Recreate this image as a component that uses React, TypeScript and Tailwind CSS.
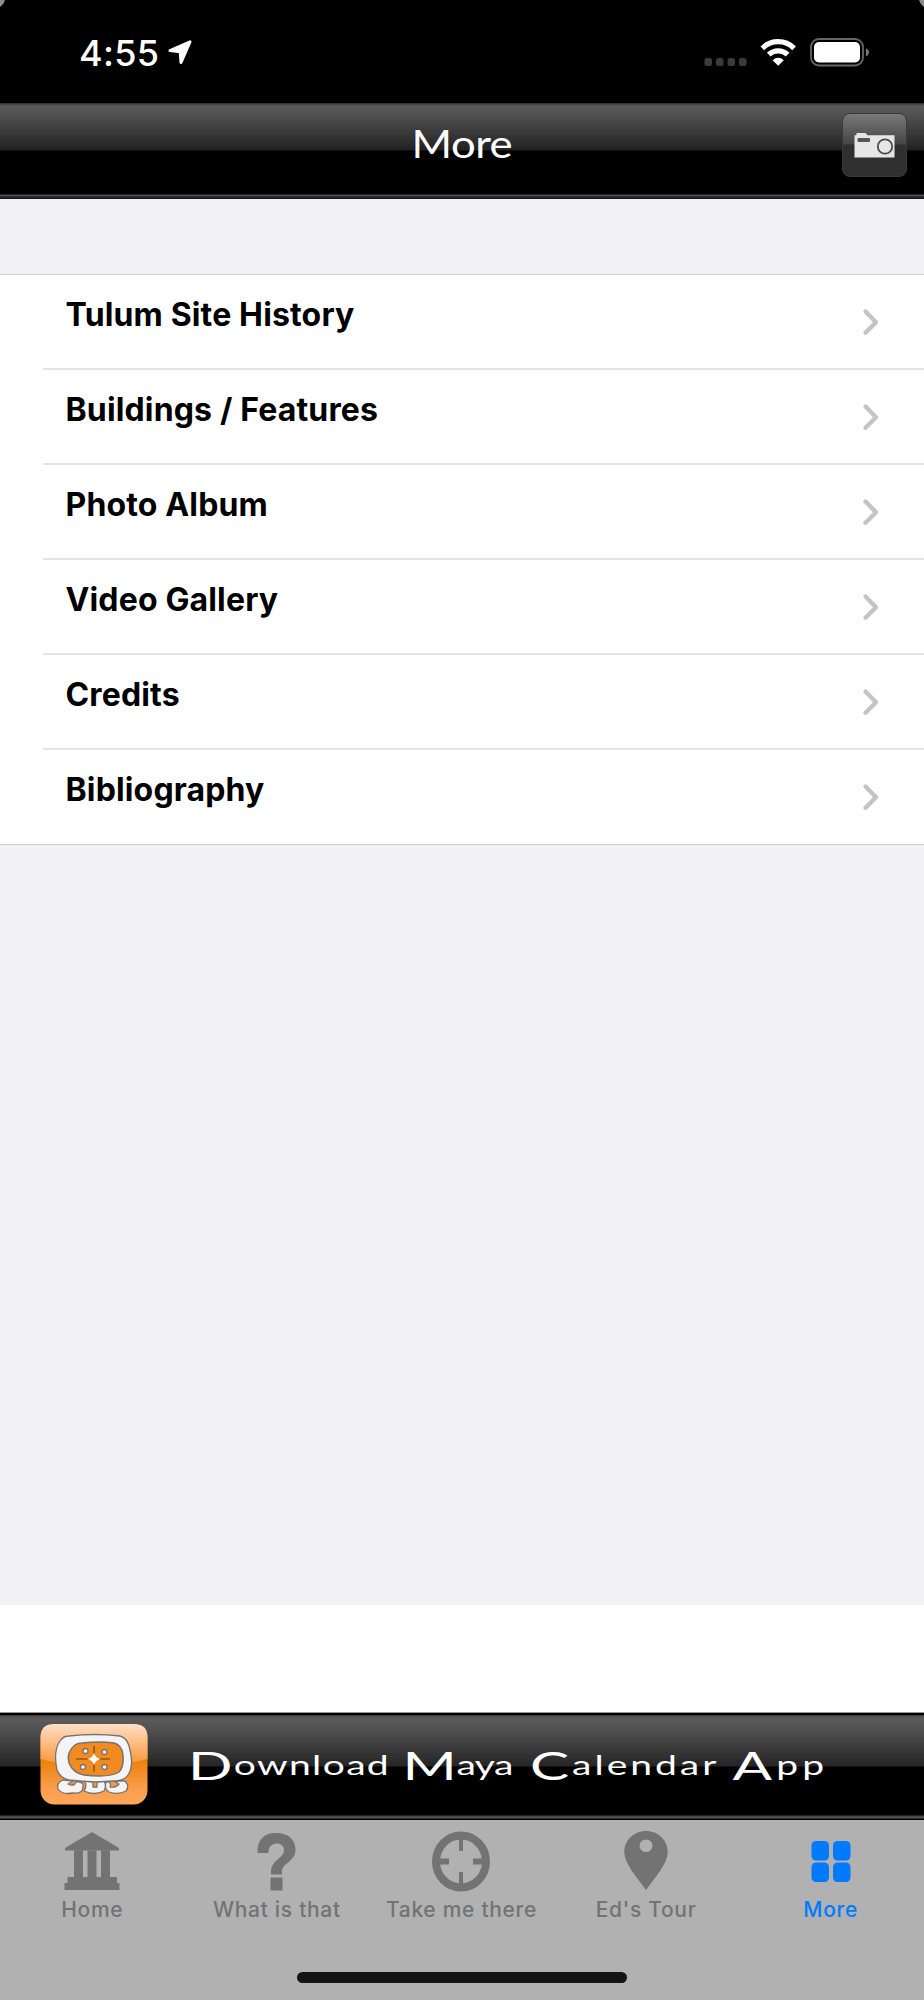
import type { ReactNode } from "react";

interface TabItem {
  label: string;
  icon: ReactNode;
  active?: boolean;
}

const MENU_ITEMS = [
  "Tulum Site History",
  "Buildings / Features",
  "Photo Album",
  "Video Gallery",
  "Credits",
  "Bibliography",
];

const TABS: TabItem[] = [
  { label: "Home", icon: <TempleIcon /> },
  { label: "What is that", icon: <QuestionIcon /> },
  { label: "Take me there", icon: <CrosshairIcon /> },
  { label: "Ed's Tour", icon: <PinIcon /> },
  { label: "More", icon: <GridIcon />, active: true },
];

export default function App() {
  return (
    <div className="flex h-[2000px] w-[924px] flex-col overflow-hidden bg-white font-['Inter',sans-serif]">
      <StatusBar />
      <NavBar title="More" />

      <main className="h-[1406px] shrink-0 bg-[#f2f1f6] pt-[75px]">
        <ul className="flex flex-col border-t border-[#cfcfd2] bg-white">
          {MENU_ITEMS.map((item) => (
            <MenuRow key={item} label={item} />
          ))}
        </ul>
      </main>

      <div className="h-[107px] shrink-0 bg-white" />
      <AppBanner />
      <TabBar />
    </div>
  );
}

function StatusBar() {
  return (
    <header className="relative flex h-[103px] shrink-0 items-start bg-black pl-[79px] text-white">
      <svg className="absolute left-0 top-0" width="924" height="8" aria-hidden="true">
        <path d="M0 0H5Q4 4 0 7Z" fill="#8c8c8c" />
        <path d="M924 0H919Q920 4 924 7Z" fill="#8c8c8c" />
      </svg>
      <span className="mt-[32px] w-[87px] text-[36px] font-medium leading-[42px] tracking-[0.3px]">4:55</span>
      <svg className="mt-[38px]" width="28" height="28" viewBox="0 0 28 28" aria-hidden="true">
        <path
          d="M4 12.6 24 3.8 15 24.5 14.2 13.8Z"
          fill="#fff"
          stroke="#fff"
          strokeWidth="3"
          strokeLinejoin="round"
        />
      </svg>
      <svg className="ml-auto mr-[50px] mt-[36px]" width="170" height="34" viewBox="0 0 170 34" aria-hidden="true">
        <g fill="#3b3b3b">
          <rect x="0.5" y="22" width="7.5" height="8" rx="2.5" />
          <rect x="12" y="22" width="7.5" height="8" rx="2.5" />
          <rect x="23.5" y="22" width="7.5" height="8" rx="2.5" />
          <rect x="35" y="22" width="7.5" height="8" rx="2.5" />
        </g>
        <g fill="none" stroke="#fff" strokeWidth="5.2">
          <path d="M58.3 12.3a22.5 22.5 0 0 1 31.8 0" />
          <path d="M64.8 18.7a13.3 13.3 0 0 1 18.8 0" />
        </g>
        <path d="M74.2 29.8 68.6 24.2Q74.2 19.3 79.8 24.2Z" fill="#fff" />
        <rect x="107" y="3" width="52" height="26.5" rx="8" fill="none" stroke="#666" strokeWidth="1.8" />
        <rect x="110" y="6" width="46" height="20.5" rx="5" fill="#fff" />
        <path d="M162 12.5Q165 13.5 165 16.3T162 20.5Z" fill="#777" />
      </svg>
    </header>
  );
}

function NavBar({ title }: { title: string }) {
  return (
    <nav className="grid h-[96px] shrink-0 grid-cols-[1fr_auto_1fr] items-start bg-[linear-gradient(to_bottom,#2a2a2a_0,#505050_2px,#5b5b5b_4px,#222_47px,#000_48px,#000_91px,#4a4a4a_92px,#555_93px,#111_94px,#333_95px,#000_96px)]">
      <span />
      <h1 className="mt-[15px] scale-x-112 font-['Lato',sans-serif] text-[39px] font-normal leading-[50px] tracking-[-0.5px] text-white">
        {title}
      </h1>
      <button
        aria-label="Camera"
        className="mr-[17px] mt-[10px] flex h-[64px] w-[65px] items-center justify-center justify-self-end rounded-[8px] border-[1.5px] border-[#3a3a3a] bg-[linear-gradient(to_bottom,#797979_0,#454545_30px,#303030_31px,#303030_100%)]"
      >
        <CameraIcon />
      </button>
    </nav>
  );
}

function MenuRow({ label }: { label: string }) {
  return (
    <li className="group flex h-[95px] pl-[43px] last:pl-0">
      <div className="flex flex-1 items-start border-b-2 border-[#e4e4e5] pl-[22.5px] group-last:border-b group-last:border-[#cfcfd2] group-last:pl-[65.5px]">
        <span className="mt-[20px] text-[32px] font-bold leading-[40px] tracking-[0.15px] text-black">{label}</span>
        <svg className="ml-auto mr-[44px] mt-[33px]" width="18" height="28" viewBox="0 0 18 28" aria-hidden="true">
          <path
            d="M3.5 3.5 14 14.2 3.5 24.7"
            fill="none"
            stroke="#c4c4c6"
            strokeWidth="4.4"
            strokeLinecap="round"
            strokeLinejoin="round"
          />
        </svg>
      </div>
    </li>
  );
}

function AppBanner() {
  return (
    <a className="flex h-[108px] shrink-0 items-start bg-[linear-gradient(to_bottom,#999_0,#999_1px,#000_1px,#000_3px,#333_3px,#555_5px,#5b5b5b_8px,#252525_54px,#000_55px,#000_103px,#444_104px,#555_106px,#000_107px)] pl-[40px]">
      <MayaAppIcon />
      <span className="ml-[40px] mt-[28px] flex origin-left scale-x-150 font-['Lato',sans-serif] text-[26px] font-normal leading-[50px] text-white">
        <BannerWord className="w-[143px] tracking-[0.9px]">Download</BannerWord>
        <BannerWord className="w-[85px] tracking-[-0.3px]">Maya</BannerWord>
        <BannerWord className="w-[135px] tracking-[2px]">Calendar</BannerWord>
        <BannerWord className="w-[62px] tracking-[2.8px]">App</BannerWord>
      </span>
    </a>
  );
}

/** One word of the banner, with an oversized capital that drops below the baseline. */
function BannerWord({ children, className }: { children: string; className: string }) {
  return (
    <span
      className={`block shrink-0 first-letter:align-[-5px] first-letter:text-[39px] first-letter:leading-none ${className}`}
    >
      {children}
    </span>
  );
}

function TabBar() {
  return (
    <footer className="flex h-[180px] shrink-0 flex-col bg-[#b1b1b1]">
      <div className="grid h-[152px] w-[923px] grid-cols-5">
        {TABS.map((tab) => (
          <div
            key={tab.label}
            className={`flex flex-col items-center pt-[10px] ${tab.active ? "text-[#007aff]" : "text-[#737373]"}`}
          >
            <svg width="60" height="62" viewBox="0 0 60 62" fill="currentColor" aria-hidden="true">
              {tab.icon}
            </svg>
            <span className="mt-[5px] whitespace-nowrap text-[21px] font-[450] leading-[26px] tracking-[0.7px]">
              {tab.label}
            </span>
          </div>
        ))}
      </div>
      <div className="h-[11px] w-[330px] self-center rounded-full bg-[#141414]" />
    </footer>
  );
}

function CameraIcon() {
  return (
    <svg width="42" height="26" viewBox="0 0 42 26" aria-hidden="true">
      <path d="M0.5 3.5 2.5 3V1H11.5L13.5 3.2H40.5V25.5H0.5Z" fill="#e6e6e6" />
      <rect x="3.5" y="6" width="12.5" height="4" rx="1" fill="#555" />
      <circle cx="31" cy="14.5" r="7.2" fill="none" stroke="#4b4b4b" strokeWidth="1.8" />
    </svg>
  );
}

function TempleIcon() {
  return (
    <>
      <path d="M30 2 57 18V20.5H3V18Z" />
      <path d="M12 20.5h9V48h-9zM25.5 20.5h9V48h-9zM39 20.5h9V48h-9z" />
      <path d="M5.5 47h49.5v6H57.5v7h-55v-7h3z" />
    </>
  );
}

function QuestionIcon() {
  return (
    <>
      <path d="M10.5 23C10 9.500 17 3 29 3C41 3 48.500 9.500 48.500 19.500C48.500 32 35 32.500 35 42V44.500H24V42C24 30 37 28.500 37 20C37 16 34 13.500 30 13.500C24.500 13.500 21.500 17 21.500 23Z" />
      <path d="M23.5 47.500h12V60.500H23.500z" />
    </>
  );
}

function CrosshairIcon() {
  return (
    <>
      <ellipse cx="30" cy="31.500" rx="25" ry="26" fill="none" stroke="currentColor" strokeWidth="8" />
      <path d="M28 8h4v13h-4zM28 42h4v13h-4zM5 28.500h13v6H5zM42 28.500h13v6H42z" />
    </>
  );
}

function PinIcon() {
  return (
    <path
      fillRule="evenodd"
      d="M30 1C42 1 51.700 10 51.700 22C51.700 34 39 47 30 60C21 47 8.300 34 8.300 22C8.300 10 18 1 30 1ZM30 9.500a6.500 6.300 0 1 0 0 12.600a6.500 6.300 0 1 0 0-12.600Z"
    />
  );
}

function GridIcon() {
  return (
    <>
      <rect x="10.500" y="11" width="17.500" height="19.500" rx="4.500" />
      <rect x="32" y="11" width="17.500" height="19.500" rx="4.500" />
      <rect x="10.500" y="32.500" width="17.500" height="19.500" rx="4.500" />
      <rect x="32" y="32.500" width="17.500" height="19.500" rx="4.500" />
    </>
  );
}

function MayaAppIcon() {
  return (
    <svg className="mt-[12px] shrink-0" width="108" height="81" viewBox="0 0 108 81" aria-hidden="true">
      <defs>
        <linearGradient id="base" x1="0" y1="0" x2="0" y2="1">
          <stop offset="0.4" stopColor="#ea7c00" />
          <stop offset="0.8" stopColor="#fb9d4b" />
          <stop offset="1" stopColor="#ffa75e" />
        </linearGradient>
        <linearGradient id="gloss" x1="0" y1="0" x2="0" y2="1">
          <stop offset="0" stopColor="#ffdfc7" />
          <stop offset="1" stopColor="#f6932f" />
        </linearGradient>
      </defs>
      <rect x="0.5" width="107" height="80.5" rx="14" fill="url(#base)" />
      <path d="M14.5 0H93.5Q107.5 0 107.5 13V35Q54 50 0.5 35V13Q0.5 0 14.5 0Z" fill="url(#gloss)" />
      <g fill="#f4f4f4" stroke="#737373" strokeWidth="1.3" strokeLinejoin="round">
        <path d="M23 56Q16 59 18 65Q22 71 33 69Q43 70 43 63V60Q40 57 36 58Q34 63 28 60L33 57Z" />
        <path d="M45 57Q47 63 44 67Q54 72 64 67Q67 61 64 57L57 58V63L53 63V58Z" />
        <path d="M66 58Q72 57 70 63Q76 64 79 60L74 57L85 57Q90 62 86 67Q78 71 69 68Q64 65 66 58Z" />
        <path d="M29 12Q54 9 80 12Q88 14 90 26Q94 42 88 51Q84 57 73 57Q52 59 29 56Q20 54 17 46Q13 27 20 17Q23 12 29 12Z" />
        <path
          d="M42 19Q60 17 74 19Q82 21 83 31Q84 43 79 48Q70 54 44 51Q33 49 29 39Q26 28 35 21Q38 19 42 19Z"
          fill="#f18a20"
          strokeWidth="1.5"
        />
        <path d="M54 22V48M36 35H70" stroke="#713d10" strokeWidth="1.1" />
        <path d="M54 28.5Q55 34 61 35Q55 36 54 41.5Q53 36 47 35Q53 34 54 28.5Z" fill="#fff" stroke="none" />
        <circle cx="45.5" cy="27" r="2.5" />
        <circle cx="64.5" cy="28" r="2.5" />
        <circle cx="43" cy="43" r="2.5" />
        <circle cx="64.5" cy="43" r="2.5" />
      </g>
    </svg>
  );
}
